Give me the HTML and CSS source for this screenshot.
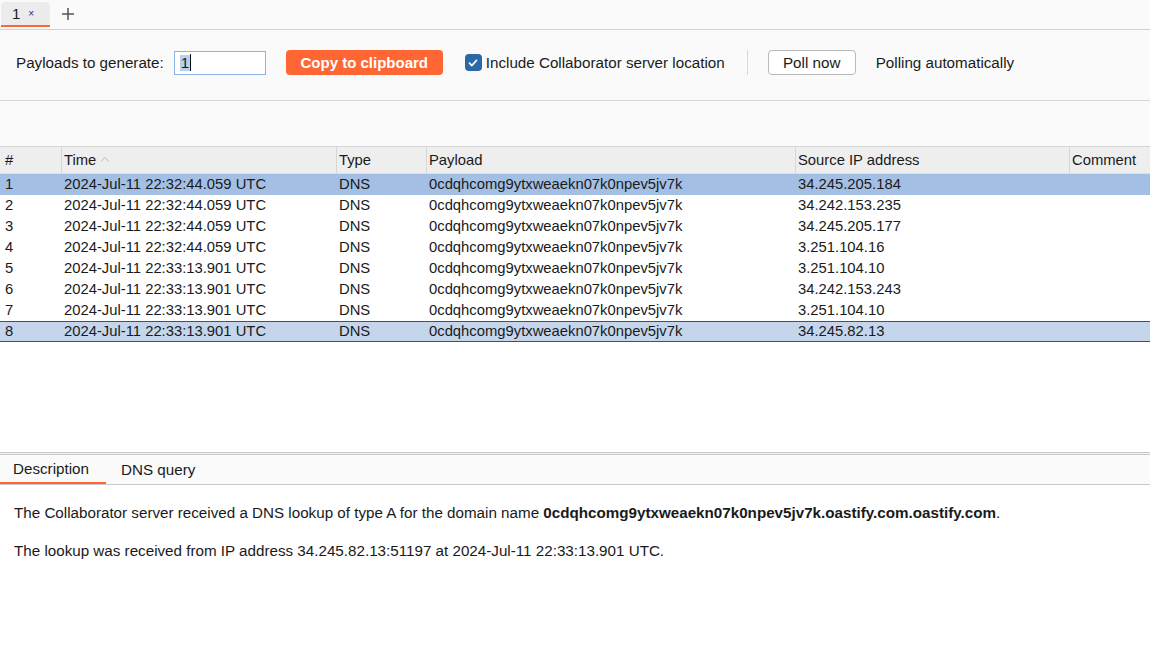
FILE: index.html
```html
<!DOCTYPE html>
<html>
<head>
<meta charset="utf-8">
<link rel="stylesheet" href="styles.css">
</head>
<body>
<div class="app">
  <div class="tabbar">
    <div class="tab"><span class="tab-num">1</span><span class="tab-x">×</span></div>
    <div class="tab-add">
      <svg width="14" height="14" viewBox="0 0 14 14"><path d="M7 1v12M1 7h12" stroke="#555" stroke-width="1.5" fill="none"/></svg>
    </div>
  </div>
  <div class="toolbar">
    <span class="label">Payloads to generate:</span>
    <div class="input"><span class="sel">1</span><span class="caret"></span></div>
    <button class="btn-primary">Copy to clipboard</button>
    <label class="check">
      <span class="box"><svg width="12" height="12" viewBox="0 0 12 12"><path d="M2.5 6.2l2.3 2.4 4.7-5.2" stroke="#fff" stroke-width="1.7" fill="none" stroke-linecap="round" stroke-linejoin="round"/></svg></span>
      <span>Include Collaborator server location</span>
    </label>
    <span class="vsep"></span>
    <button class="btn">Poll now</button>
    <span class="label">Polling automatically</span>
  </div>
  <div class="spacer"></div>
  <div class="table">
    <div class="row head">
      <div class="c">#</div>
      <div class="c">Time <span class="sort"><svg width="10" height="6" viewBox="0 0 10 6"><path d="M1 5.5L5 1.5 9 5.5" stroke="#b8b8b8" stroke-width="1" fill="none"/></svg></span></div>
      <div class="c">Type</div>
      <div class="c">Payload</div>
      <div class="c">Source IP address</div>
      <div class="c">Comment</div>
    </div>
    <div class="row sel1"><div class="c">1</div><div class="c">2024-Jul-11 22:32:44.059 UTC</div><div class="c">DNS</div><div class="c">0cdqhcomg9ytxweaekn07k0npev5jv7k</div><div class="c">34.245.205.184</div><div class="c"></div></div>
    <div class="row"><div class="c">2</div><div class="c">2024-Jul-11 22:32:44.059 UTC</div><div class="c">DNS</div><div class="c">0cdqhcomg9ytxweaekn07k0npev5jv7k</div><div class="c">34.242.153.235</div><div class="c"></div></div>
    <div class="row"><div class="c">3</div><div class="c">2024-Jul-11 22:32:44.059 UTC</div><div class="c">DNS</div><div class="c">0cdqhcomg9ytxweaekn07k0npev5jv7k</div><div class="c">34.245.205.177</div><div class="c"></div></div>
    <div class="row"><div class="c">4</div><div class="c">2024-Jul-11 22:32:44.059 UTC</div><div class="c">DNS</div><div class="c">0cdqhcomg9ytxweaekn07k0npev5jv7k</div><div class="c">3.251.104.16</div><div class="c"></div></div>
    <div class="row"><div class="c">5</div><div class="c">2024-Jul-11 22:33:13.901 UTC</div><div class="c">DNS</div><div class="c">0cdqhcomg9ytxweaekn07k0npev5jv7k</div><div class="c">3.251.104.10</div><div class="c"></div></div>
    <div class="row"><div class="c">6</div><div class="c">2024-Jul-11 22:33:13.901 UTC</div><div class="c">DNS</div><div class="c">0cdqhcomg9ytxweaekn07k0npev5jv7k</div><div class="c">34.242.153.243</div><div class="c"></div></div>
    <div class="row"><div class="c">7</div><div class="c">2024-Jul-11 22:33:13.901 UTC</div><div class="c">DNS</div><div class="c">0cdqhcomg9ytxweaekn07k0npev5jv7k</div><div class="c">3.251.104.10</div><div class="c"></div></div>
    <div class="row sel2"><div class="c">8</div><div class="c">2024-Jul-11 22:33:13.901 UTC</div><div class="c">DNS</div><div class="c">0cdqhcomg9ytxweaekn07k0npev5jv7k</div><div class="c">34.245.82.13</div><div class="c"></div></div>
  </div>
  <div class="divider"></div>
  <div class="detail-tabs">
    <div class="dtab active">Description</div>
    <div class="dtab">DNS query</div>
  </div>
  <div class="detail">
    <p>The Collaborator server received a DNS lookup of type A for the domain name <b>0cdqhcomg9ytxweaekn07k0npev5jv7k.oastify.com.oastify.com</b>.</p>
    <p>The lookup was received from IP address 34.245.82.13:51197 at 2024-Jul-11 22:33:13.901 UTC.</p>
  </div>
</div>
</body>
</html>
```

FILE: styles.css
```css
* { box-sizing: border-box; }
html, body { margin: 0; padding: 0; }
body {
  font-family: "Liberation Sans", Arial, sans-serif;
  font-size: 15.2px;
  color: #1a1a1a;
  background: #fff;
}
.app {
  width: 1150px;
  height: 666px;
  display: flex;
  flex-direction: column;
  overflow: hidden;
}
.tabbar {
  height: 30px;
  flex: 0 0 30px;
  background: #fafafa;
  border-bottom: 1px solid #d2d2d2;
  display: flex;
  align-items: flex-start;
  padding-top: 2px;
}
.tab {
  width: 49px;
  height: 25px;
  background: #ececec;
  border-radius: 4px 4px 0 0;
  border-bottom: 2px solid #ff6633;
  display: flex;
  align-items: center;
  padding-left: 11px;
  gap: 8px;
  margin-left: 1px;
}
.tab-num { font-size: 15px; }
.tab-x { font-size: 10px; color: #333; }
.tab-add {
  margin-left: 11px;
  margin-top: 5px;
  display: flex;
}
.toolbar {
  height: 71px;
  flex: 0 0 71px;
  background: #fafafa;
  border-bottom: 1px solid #d6d6d6;
  display: flex;
  align-items: center;
  padding-left: 16px;
  padding-bottom: 5px;
}
.label { white-space: nowrap; }
.input {
  margin-left: 10px;
  width: 92px;
  height: 24px;
  border: 1.5px solid #8db3e2;
  background: #fff;
  display: flex;
  align-items: center;
  padding-left: 5px;
}
.input .sel { background: #b9d1ef; line-height: 16px; padding: 0 1px; }
.input .caret { width: 1px; height: 17px; background: #111; }
.btn-primary {
  margin-left: 20px;
  height: 25px;
  width: 157px;
  border: none;
  border-radius: 4px;
  background: #ff6633;
  color: #fff;
  font-family: inherit;
  font-weight: bold;
  font-size: 15px;
  padding: 0;
}
.check {
  margin-left: 22px;
  display: flex;
  align-items: center;
  gap: 4px;
  white-space: nowrap;
}
.box {
  width: 17px;
  height: 17px;
  border-radius: 4px;
  background: #2c67a6;
  display: flex;
  align-items: center;
  justify-content: center;
}
.vsep {
  width: 1px;
  height: 25px;
  background: #d8d8d8;
  margin-left: 22px;
}
.btn {
  margin-left: 20px;
  width: 88px;
  height: 25px;
  border: 1px solid #b9b9b9;
  border-radius: 4px;
  background: #fff;
  font-family: inherit;
  font-size: 15.2px;
  color: #1a1a1a;
  padding: 0;
}
.btn + .label { margin-left: 20px; }
.spacer {
  height: 46px;
  flex: 0 0 46px;
  background: #fafafa;
  border-bottom: 1px solid #d6d6d6;
}
.table {
  flex: 0 0 305px;
  background: #fff;
  font-size: 14.8px;
}
.row {
  display: grid;
  grid-template-columns: 61px 275px 90px 369px 274px 1fr;
  height: 21px;
  line-height: 21px;
  white-space: nowrap;
}
.row .c { padding-left: 3px; overflow: hidden; }
.row .c:first-child { padding-left: 5px; }
.head {
  height: 27px;
  line-height: 27px;
  background: #eeeeee;
  border-bottom: 1px solid #e0e0e0;
}
.head .c { display: flex; align-items: center; }
.head .c + .c { border-left: 1px solid #d7d7d7; padding-left: 2px; }
.sort { display: flex; margin-left: 4px; margin-top: -2px; }
.sel1 { background: #a4bfe4; }
.sel2 {
  background: #c5d6ec;
  border-top: 1px solid #33557c;
  border-bottom: 1px solid #33557c;
  line-height: 19px;
}
.divider {
  flex: 0 0 3px;
  border-top: 1px solid #c9c9c9;
  border-bottom: 1px solid #c9c9c9;
  background: #f3f3f3;
}
.detail-tabs {
  flex: 0 0 30px;
  background: #fafafa;
  border-bottom: 1px solid #c9c9c9;
  box-shadow: 0 1px 0 #e6e6e6;
  display: flex;
  align-items: stretch;
  font-size: 15.2px;
}
.dtab {
  padding: 0 13px;
  line-height: 29px;
}
.dtab.active {
  width: 106px;
  border-bottom: 2px solid #ff6633;
  line-height: 27px;
}
.dtab + .dtab { padding-left: 15px; }
.detail {
  flex: 1;
  background: #fff;
  padding: 18px 14px;
}
.detail p {
  margin: 0 0 19px;
  font-size: 15.2px;
  line-height: 19px;
}
```
